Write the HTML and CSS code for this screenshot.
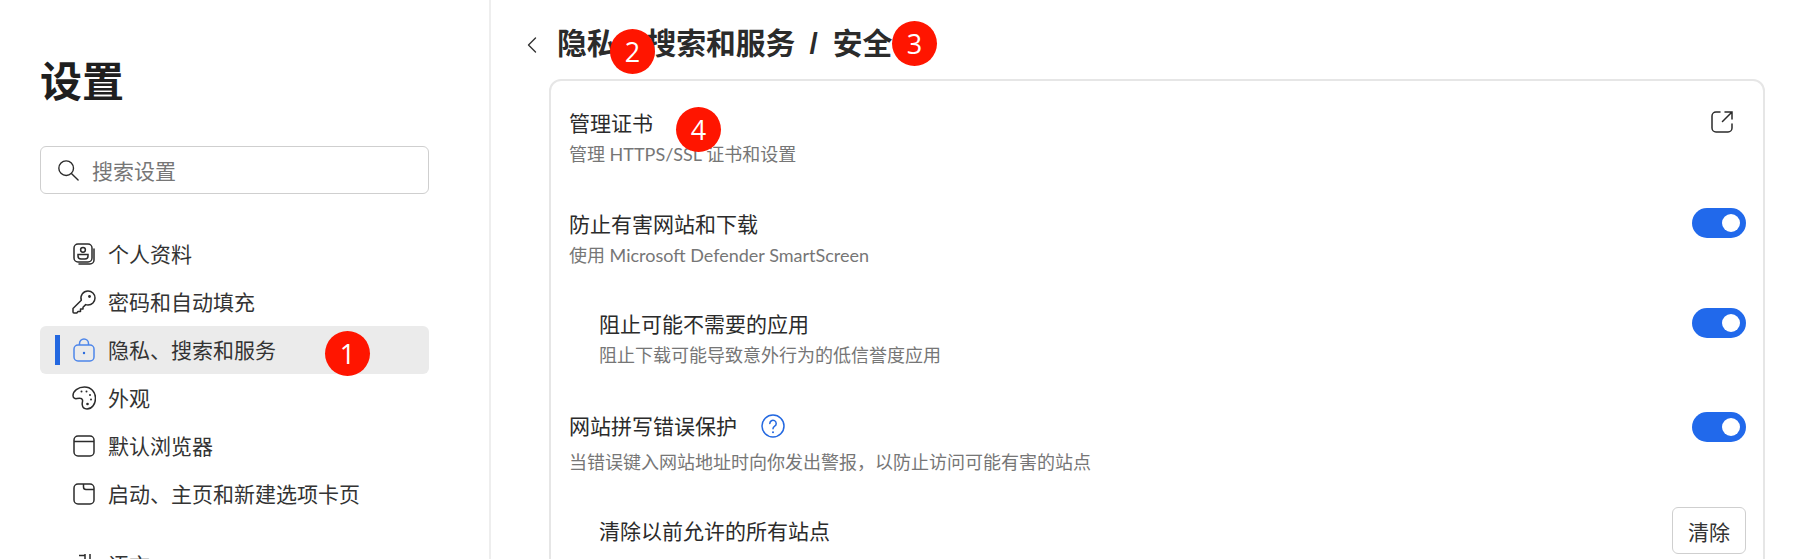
FILE: index.html
```html
<!DOCTYPE html>
<html lang="zh-CN">
<head>
    <meta charset="UTF-8">
    <meta name="viewport" content="width=device-width, initial-scale=1.0">
    <title>设置</title>
    <link rel="stylesheet" href="styles.css">
</head>
<body>
    <div class="page">
        <aside class="sidebar">
            <h1 class="sidebar-title">设置</h1>
            <div class="search">
                <svg class="search-icon" viewBox="0 0 24 24" fill="none" stroke="#2b2b2b" stroke-width="1.5" stroke-linecap="round">
                    <circle cx="10" cy="10" r="8"/>
                    <path d="M16 16l7 7"/>
                </svg>
                <span class="search-text">搜索设置</span>
            </div>

            <nav class="nav">
                <a class="nav-item">
                    <svg class="nav-icon" viewBox="-1 -1 24 24" fill="none" stroke="#2b2b2b" stroke-width="1.5">
                        <rect x="1" y="1" width="18" height="18" rx="4"/>
                        <circle cx="10" cy="6.800" r="2.400"/>
                        <path d="M5 11.500h10v1.500a3 3 0 0 1-3 3H8a3 3 0 0 1-3-3z"/>
                        <path d="M21 6v11a4 4 0 0 1-4 4H6" stroke-linecap="round"/>
                    </svg>
                    <span>个人资料</span>
                </a>
                <a class="nav-item">
                    <svg class="nav-icon" viewBox="0 0 24 24" fill="none" stroke="#2b2b2b" stroke-width="1.5" stroke-linejoin="round">
                        <path d="M16 1a7 7 0 0 1 0 14 7 7 0 0 1-2.300-.4L11 17.300V19H8.500v2.500H6L4.800 23H2a1 1 0 0 1-1-1v-3.500l8.300-8.300A7 7 0 0 1 16 1z"/>
                        <circle cx="17.500" cy="6.500" r="1.400" fill="#2b2b2b" stroke="none"/>
                    </svg>
                    <span>密码和自动填充</span>
                </a>
                <a class="nav-item nav-item-active">
                    <svg class="nav-icon" viewBox="-1 0 24 24" fill="none" stroke="#4d86ea" stroke-width="1.500">
                        <rect x="1" y="7" width="20" height="16" rx="4"/>
                        <path d="M6.500 7V5.500a4.500 4.500 0 0 1 9 0V7"/>
                        <circle cx="11" cy="15" r="1.200" fill="#2b6bdd" stroke="none"/>
                    </svg>
                    <span>隐私、搜索和服务</span>
                </a>
                <a class="nav-item">
                    <svg class="nav-icon" viewBox="0 0 24 24" fill="none" stroke="#2b2b2b" stroke-width="1.500" stroke-linejoin="round">
                        <path d="M12.500 1C6 1 1 5 1 9.500c0 2.500 2 3.500 4 3 2.500-.6 5-.5 5.500 1.500.4 1.500-.5 2.500-.3 4.500.3 3 2.300 4.500 4.800 4.500C20 23 23.500 18 23.500 12S19 1 12.500 1z"/>
                        <circle cx="9.500" cy="5.500" r="1" fill="#2b2b2b" stroke="none"/>
                        <circle cx="14.500" cy="5.500" r="1" fill="#2b2b2b" stroke="none"/>
                        <circle cx="18" cy="9" r="1" fill="#2b2b2b" stroke="none"/>
                        <circle cx="19" cy="13.500" r="1" fill="#2b2b2b" stroke="none"/>
                        <circle cx="15.500" cy="18" r="1.300" fill="#2b2b2b" stroke="none"/>
                    </svg>
                    <span>外观</span>
                </a>
                <a class="nav-item">
                    <svg class="nav-icon" viewBox="-1 -1 24 24" fill="none" stroke="#2b2b2b" stroke-width="1.500">
                        <rect x="1" y="1" width="20" height="20" rx="4"/>
                        <path d="M1 6.500h20"/>
                    </svg>
                    <span>默认浏览器</span>
                </a>
                <a class="nav-item">
                    <svg class="nav-icon" viewBox="-1 -1 24 24" fill="none" stroke="#2b2b2b" stroke-width="1.500">
                        <rect x="1" y="1" width="20" height="20" rx="4"/>
                        <path d="M10.500 1v3a2.500 2.500 0 0 0 2.500 2.500h8"/>
                    </svg>
                    <span>启动、主页和新建选项卡页</span>
                </a>
                <a class="nav-item nav-item-group">
                    <svg class="nav-icon" viewBox="0 0 24 24" fill="none" stroke="#2b2b2b" stroke-width="1.500">
                        <path d="M7 2.500h6M13 1v6M18 1v6M3 7h18M12 7c-1 5-4 8-9 10M5 10c1 3 4 6 8 7"/>
                        <path d="M11 23l5-11 5 11M13 19h6"/>
                    </svg>
                    <span>语言</span>
                </a>
            </nav>
        </aside>

        <main class="content">
            <header class="content-head">
                <svg class="back" viewBox="0 0 10 16" fill="none" stroke="#333" stroke-width="1.400" stroke-linecap="round" stroke-linejoin="round">
                    <path d="M8.500 1L1.500 8l7 7"/>
                </svg>
                <h2 class="crumbs">隐私、搜索和服务<span class="crumb-sep">/</span>安全</h2>
            </header>

            <section class="card">
                <div class="row row-first">
                    <div class="row-text">
                        <div class="row-title">管理证书</div>
                        <div class="row-sub">管理 HTTPS/SSL 证书和设置</div>
                    </div>
                    <svg class="ext" viewBox="0 0 22 22" fill="none" stroke="#2b2b2b" stroke-width="1.500" stroke-linecap="round">
                        <path d="M9 1H5a4 4 0 0 0-4 4v12a4 4 0 0 0 4 4h12a4 4 0 0 0 4-4v-4"/>
                        <path d="M14 1h7v7M21 1l-9.500 9.500"/>
                    </svg>
                </div>
                <div class="row row-second">
                    <div class="row-text">
                        <div class="row-title">防止有害网站和下载</div>
                        <div class="row-sub">使用 Microsoft Defender SmartScreen</div>
                    </div>
                    <span class="toggle"></span>
                </div>
                <div class="row row-nested row-third">
                    <div class="row-text">
                        <div class="row-title">阻止可能不需要的应用</div>
                        <div class="row-sub">阻止下载可能导致意外行为的低信誉度应用</div>
                    </div>
                    <span class="toggle"></span>
                </div>
                <div class="row row-fourth">
                    <div class="row-text">
                        <div class="row-title row-title-help">网站拼写错误保护
                            <svg class="help" viewBox="0 0 24 24" fill="none" stroke="#2368e0" stroke-width="1.500" stroke-linecap="round">
                                <circle cx="12" cy="12" r="11"/>
                                <path d="M8.800 9.500a3.200 3.200 0 1 1 4.900 2.700c-1.100.7-1.700 1.300-1.700 2.600"/>
                                <circle cx="12" cy="18.300" r="1" fill="#2368e0" stroke="none"/>
                            </svg>
                        </div>
                        <div class="row-sub">当错误键入网站地址时向你发出警报，以防止访问可能有害的站点</div>
                    </div>
                    <span class="toggle toggle-low"></span>
                </div>
                <div class="row row-nested row-action">
                    <div class="row-title row-title-action">清除以前允许的所有站点</div>
                    <button class="btn">清除</button>
                </div>
            </section>
        </main>
    </div>

    <span class="marker marker-1">1</span>
    <span class="marker marker-2">2</span>
    <span class="marker marker-3">3</span>
    <span class="marker marker-4">4</span>
</body>
</html>
```

FILE: styles.css
```css
html, body {
    margin: 0;
    height: 100%;
    background: #fff;
    overflow: hidden;
}

body {
    position: relative;
    font-family: Roboto, "Noto Sans CJK SC", sans-serif;
    color: #242424;
}

.page {
    display: flex;
    height: 559px;
    overflow: hidden;
}

/* sidebar */
.sidebar {
    width: 491px;
    flex-shrink: 0;
    box-sizing: border-box;
    padding: 54px 60px 0 40px;
    border-right: 2px solid #eeeeee;
}

.sidebar-title {
    margin: 0 0 34px;
    font-size: 42px;
    line-height: 58px;
    font-weight: 700;
    color: #1f1f1f;
}

.search {
    display: flex;
    align-items: center;
    height: 48px;
    box-sizing: border-box;
    padding-left: 16px;
    border: 1px solid #cfcfcf;
    border-radius: 6px;
}

.search-icon {
    width: 22px;
    height: 22px;
    margin-right: 13px;
}

.search-text {
    font-size: 21px;
    color: #767676;
}

.nav {
    margin-top: 36px;
}

.nav-item {
    position: relative;
    display: flex;
    align-items: center;
    height: 48px;
    padding-left: 32px;
    border-radius: 6px;
    font-size: 21px;
    color: #333;
}

.nav-item span {
    padding-bottom: 2px;
}

.nav-item-active {
    background: #ebebeb;
}

.nav-item-active::before {
    content: "";
    position: absolute;
    left: 15px;
    top: 9px;
    width: 5px;
    height: 30px;
    background: #2368e0;
}

.nav-item-group {
    margin-top: 23px;
}

.nav-icon {
    width: 24px;
    height: 24px;
    margin-right: 12px;
    flex-shrink: 0;
}

/* main */
.content {
    flex: 1;
    padding: 20px 30px 0 35px;
    min-width: 0;
}

.content-head {
    display: flex;
    align-items: center;
    height: 46px;
    margin-bottom: 13px;
}

.back {
    width: 10px;
    height: 16px;
    margin: 4px 20px 0 1px;
}

.crumbs {
    margin: 2px 0 0;
    font-size: 29.800px;
    line-height: 40px;
    font-weight: 700;
    color: #2b2b2b;
}

.crumb-sep {
    margin: 0 15px 0 14px;
    font-family: "Liberation Sans", sans-serif;
}

.card {
    box-sizing: border-box;
    margin-left: 23px;
    height: 600px;
    border: 2px solid #e6e6e6;
    border-radius: 12px;
}

.row {
    display: flex;
    justify-content: space-between;
    align-items: flex-start;
    box-sizing: border-box;
    padding: 26px 17px 0 18px;
}

.row-first { height: 101px; }
.row-second { height: 100px; }
.row-third { height: 102px; }
.row-fourth { height: 105px; }

.row-nested {
    padding-left: 48px;
}

.row-title {
    display: flex;
    align-items: center;
    box-sizing: border-box;
    height: 32px;
    padding-bottom: 3px;
    font-size: 21px;
    color: #2b2b2b;
    white-space: nowrap;
}

.row-title-help {
    margin-bottom: 5px;
}

.row-sub {
    font-family: Lato, "Noto Sans CJK SC", sans-serif;
    font-size: 18px;
    line-height: 30px;
    color: #767676;
}

.ext {
    width: 22px;
    height: 22px;
    margin: 4px 13px 0 0;
}

.toggle {
    position: relative;
    width: 54px;
    height: 30px;
    border-radius: 15px;
    background: #2169eb;
}

.toggle::after {
    content: "";
    position: absolute;
    right: 6px;
    top: 6px;
    width: 18px;
    height: 18px;
    border-radius: 50%;
    background: #fff;
}

.toggle-low {
    margin-top: 2px;
}

.help {
    width: 24px;
    height: 24px;
    margin: 3px 0 0 24px;
}

.row-action {
    align-items: center;
    padding-top: 0;
    height: 83px;
}

.row-title-action {
    padding: 0 0 1px;
}

.btn {
    width: 74px;
    height: 47px;
    padding: 0;
    border: 1px solid #cfcfcf;
    border-radius: 6px;
    background: #fff;
    font-family: inherit;
    font-size: 21px;
    color: #333;
}

/* numbered annotation circles on top of the screenshot */
.marker {
    position: absolute;
    width: 45px;
    height: 45px;
    border-radius: 50%;
    background: #ff1500;
    color: #fff;
    font-family: "Open Sans", sans-serif;
    font-size: 27px;
    line-height: 45px;
    text-align: center;
}

.marker-1 { left: 325px; top: 331px; }
.marker-2 { left: 610px; top: 29px; }
.marker-3 { left: 892px; top: 21px; }
.marker-4 { left: 676px; top: 107px; }
```
